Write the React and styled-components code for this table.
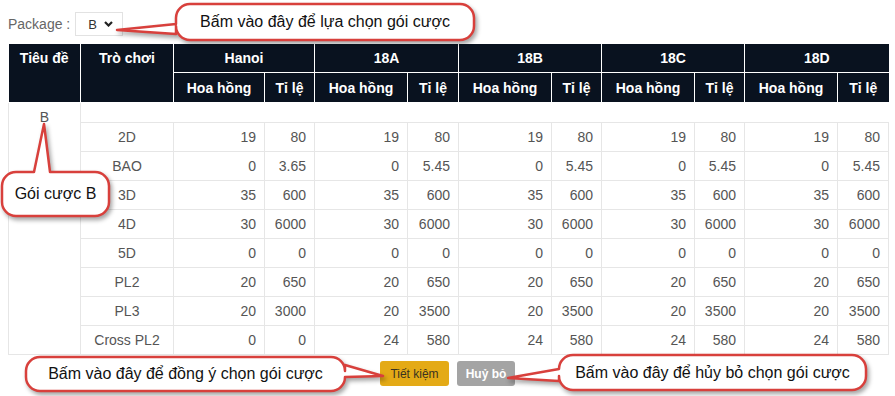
import React from 'react';
import styled, { createGlobalStyle } from 'styled-components';

const GlobalStyle = createGlobalStyle`
  body {
    margin: 0;
    background: #fff;
    font-family: "Liberation Sans", Arial, sans-serif;
  }
`;

const columns = ['Hanoi', '18A', '18B', '18C', '18D'];
const colWidths = [72, 93, 91, 50, 93, 51, 93, 50, 93, 50, 93, 51];

const rows = [
  { game: '2D', values: [[19, 80], [19, 80], [19, 80], [19, 80], [19, 80]] },
  { game: 'BAO', values: [[0, 3.65], [0, 5.45], [0, 5.45], [0, 5.45], [0, 5.45]] },
  { game: '3D', values: [[35, 600], [35, 600], [35, 600], [35, 600], [35, 600]] },
  { game: '4D', values: [[30, 6000], [30, 6000], [30, 6000], [30, 6000], [30, 6000]] },
  { game: '5D', values: [[0, 0], [0, 0], [0, 0], [0, 0], [0, 0]] },
  { game: 'PL2', values: [[20, 650], [20, 650], [20, 650], [20, 650], [20, 650]] },
  { game: 'PL3', values: [[20, 3000], [20, 3500], [20, 3500], [20, 3500], [20, 3500]] },
  { game: 'Cross PL2', values: [[0, 0], [24, 580], [24, 580], [24, 580], [24, 580]] },
];

const Page = styled.div`
  position: relative;
  width: 895px;
  height: 396px;
  padding: 12px 8px 0;
  box-sizing: border-box;
`;

const Toolbar = styled.div`
  display: flex;
  align-items: center;
  gap: 5px;
  height: 24px;
`;

const Label = styled.span`
  font-size: 14px;
  color: #666;
`;

const SelectBox = styled.div`
  display: flex;
  align-items: center;
  justify-content: space-between;
  width: 48px;
  height: 24px;
  box-sizing: border-box;
  padding: 0 9px 0 12px;
  border: 1px solid #e2e2e2;
  font-size: 13px;
  color: #333;
`;

const Table = styled.table`
  margin-top: 8px;
  width: 879px;
  table-layout: fixed;
  border-collapse: collapse;
  font-size: 14px;
`;

const Th = styled.th`
  background: #09121f;
  color: #fff;
  font-weight: bold;
  font-size: 14px;
  border: 1px solid #fff;
  border-top: none;
  height: ${(p) => p.h || 28}px;
  padding: 0;
  vertical-align: ${(p) => (p.top ? 'top' : 'middle')};
  line-height: ${(p) => (p.top ? '28px' : 'normal')};
  &:first-child {
    border-left: none;
  }
  &:last-child {
    border-right: none;
  }
`;

const Td = styled.td`
  border: 1px solid #e6e6e6;
  height: 28px;
  padding: 0 8px;
  color: #555;
  text-align: ${(p) => p.align || 'right'};
  white-space: nowrap;
`;

const TitleCell = styled.td`
  border: 1px solid #e6e6e6;
  vertical-align: top;
  text-align: center;
  color: #555;
  padding: 6px 0 0;
`;

const SpacerCell = styled.td`
  height: 19px;
  padding: 0;
  border-bottom: 1px solid #e6e6e6;
`;

const Footer = styled.div`
  display: flex;
  justify-content: center;
  gap: 8px;
  margin-top: 6px;
  width: 879px;
`;

const Button = styled.button`
  width: ${(p) => (p.variant === 'save' ? 69 : 58)}px;
  height: 25px;
  padding: 0;
  border: none;
  border-radius: 3px;
  font-family: "Liberation Sans", Arial, sans-serif;
  font-size: 12px;
  font-weight: ${(p) => (p.variant === 'save' ? 'normal' : 'bold')};
  background: ${(p) => (p.variant === 'save' ? '#e4aa16' : '#a4a4a4')};
  color: ${(p) => (p.variant === 'save' ? '#3a3320' : '#fff')};
`;

const CalloutWrap = styled.div`
  position: absolute;
  left: ${(p) => p.x}px;
  top: ${(p) => p.y}px;
  width: ${(p) => p.w}px;
  height: ${(p) => p.h}px;
  display: flex;
  align-items: center;
  justify-content: center;
  font-size: 16px;
  color: #111;
  white-space: nowrap;
  svg {
    position: absolute;
    left: 0;
    top: 0;
    overflow: visible;
    filter: drop-shadow(2px 3px 2px rgba(0, 0, 0, 0.35));
  }
  span {
    position: relative;
  }
`;

function calloutPath(w, h, r, side, a, b, tx, ty) {
  const tl = `A${r},${r} 0 0 1 ${r},0`;
  if (side === 'left') {
    return `M${r},0 H${w - r} A${r},${r} 0 0 1 ${w},${r} V${h - r} A${r},${r} 0 0 1 ${w - r},${h} H${r} A${r},${r} 0 0 1 0,${h - r} V${b} L${tx},${ty} L0,${a} V${r} ${tl} Z`;
  }
  if (side === 'right') {
    return `M${r},0 H${w - r} A${r},${r} 0 0 1 ${w},${r} V${a} L${tx},${ty} L${w},${b} V${h - r} A${r},${r} 0 0 1 ${w - r},${h} H${r} A${r},${r} 0 0 1 0,${h - r} V${r} ${tl} Z`;
  }
  return `M${r},0 H${a} L${tx},${ty} L${b},0 H${w - r} A${r},${r} 0 0 1 ${w},${r} V${h - r} A${r},${r} 0 0 1 ${w - r},${h} H${r} A${r},${r} 0 0 1 0,${h - r} V${r} ${tl} Z`;
}

const Callout = ({ x, y, w, h, side, a, b, tip, children }) => (
  <CalloutWrap x={x} y={y} w={w} h={h}>
    <svg width={w} height={h}>
      <path
        d={calloutPath(w, h, 14, side, a, b, tip[0] - x, tip[1] - y)}
        fill="#fff"
        stroke="#d8403c"
        strokeWidth="2.5"
        strokeLinejoin="round"
      />
    </svg>
    <span>{children}</span>
  </CalloutWrap>
);

const App = () => (
  <Page>
    <GlobalStyle />
    <Toolbar>
      <Label>Package :</Label>
      <SelectBox>
        B
        <svg width="9" height="6" viewBox="0 0 9 6">
          <path d="M1 1 L4.5 4.5 L8 1" fill="none" stroke="#222" strokeWidth="2.2" />
        </svg>
      </SelectBox>
    </Toolbar>

    <Table>
      <colgroup>
        {colWidths.map((w, i) => (
          <col key={i} style={{ width: w }} />
        ))}
      </colgroup>
      <thead>
        <tr>
          <Th rowSpan={2} top>Tiêu đề</Th>
          <Th rowSpan={2} top>Trò chơi</Th>
          {columns.map((c) => (
            <Th key={c} colSpan={2}>{c}</Th>
          ))}
        </tr>
        <tr>
          {columns.map((c) => (
            <React.Fragment key={c}>
              <Th h={29}>Hoa hồng</Th>
              <Th h={29}>Tỉ lệ</Th>
            </React.Fragment>
          ))}
        </tr>
      </thead>
      <tbody>
        <tr>
          <TitleCell rowSpan={rows.length + 1}>B</TitleCell>
          <SpacerCell colSpan={11} />
        </tr>
        {rows.map((row) => (
          <tr key={row.game}>
            <Td align="center">{row.game}</Td>
            {row.values.map(([rate, ratio], i) => (
              <React.Fragment key={i}>
                <Td>{rate}</Td>
                <Td>{ratio}</Td>
              </React.Fragment>
            ))}
          </tr>
        ))}
      </tbody>
    </Table>

    <Footer>
      <Button variant="save">Tiết kiệm</Button>
      <Button variant="cancel">Huỷ bỏ</Button>
    </Footer>

    <Callout x={176} y={4} w={298} h={36} side="left" a={20} b={30} tip={[117, 30]}>
      Bấm vào đây để lựa chọn gói cược
    </Callout>
    <Callout x={2} y={172} w={107} h={44} side="top" a={32} b={48} tip={[44, 124]}>
      Gói cược B
    </Callout>
    <Callout x={26} y={357} w={319} h={34} side="right" a={8} b={20} tip={[383, 376]}>
      Bấm vào đây để đồng ý chọn gói cược
    </Callout>
    <Callout x={559} y={355} w={307} h={35} side="left" a={14} b={26} tip={[508, 378]}>
      Bấm vào đây để hủy bỏ chọn gói cược
    </Callout>
  </Page>
);

export default App;
